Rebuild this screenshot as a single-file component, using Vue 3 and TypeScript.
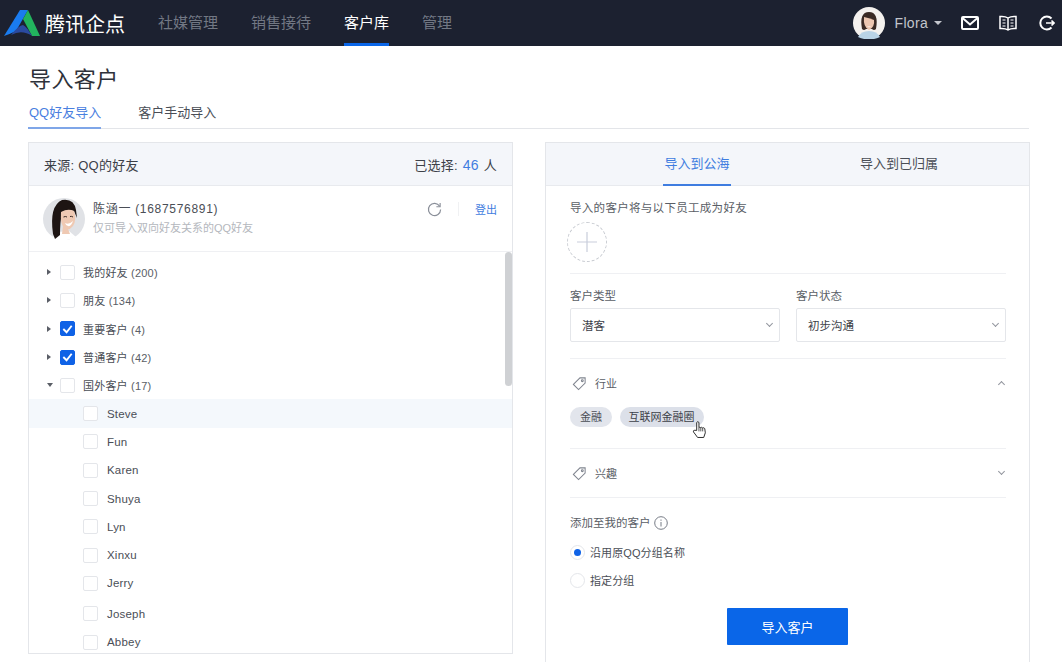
<script setup lang="ts">
const navItems = [
  { label: '社媒管理', active: false },
  { label: '销售接待', active: false },
  { label: '客户库', active: true },
  { label: '管理', active: false },
]

const groups = [
  { label: '我的好友', count: 200, checked: false, open: false },
  { label: '朋友', count: 134, checked: false, open: false },
  { label: '重要客户', count: 4, checked: true, open: false },
  { label: '普通客户', count: 42, checked: true, open: false },
  { label: '国外客户', count: 17, checked: false, open: true },
]

const friends = ['Steve', 'Fun', 'Karen', 'Shuya', 'Lyn', 'Xinxu', 'Jerry', 'Joseph', 'Abbey']
</script>

<template>
  <div class="page">
    <header class="topbar">
      <div class="brand">
        <svg class="logo" viewBox="0 0 40 28" width="40" height="28">
          <path d="M0 27 L16 1 L24 1 L12 22 Q6 25 0 27Z" fill="#1a7cf0" />
          <path d="M24 1 L36 27 L28 27 L19 10Z" fill="#22b35e" />
          <path d="M7 26 Q15 16 19 16 Q23 18 28 27 Q18 20 7 26Z" fill="#2a4aa0" />
        </svg>
        <span class="brand-name">腾讯企点</span>
      </div>
      <nav class="nav">
        <a v-for="item in navItems" :key="item.label" class="nav-item" :class="{ active: item.active }">{{ item.label }}</a>
      </nav>
      <div class="top-right">
        <svg class="top-avatar" viewBox="0 0 32 32" width="32" height="32">
          <circle cx="16" cy="16" r="16" fill="#f4f1ee" />
          <path d="M5 30 Q8 24 16 24 Q24 24 27 30 Q16 35 5 30Z" fill="#b9d3e6" />
          <path d="M9 22 Q6 5 16 5 Q26 5 23 22 Q21 24 19 22 L13 22 Q11 24 9 22Z" fill="#3a2a24" />
          <path d="M11 10 Q16 11 21 13 Q22 20 16 23 Q10 20 11 10Z" fill="#edc7b1" />
          <path d="M14 19.500 Q16 21 18 19.500Z" fill="#fff" />
        </svg>
        <span class="user-name">Flora</span>
        <span class="caret"></span>
        <svg class="top-icon mail" viewBox="0 0 18 14" width="18" height="14" fill="none" stroke="#fff" stroke-width="2">
          <rect x="1" y="1" width="16" height="12" rx="1" />
          <path d="M1.5 2 L9 8.5 L16.5 2" />
        </svg>
        <svg class="top-icon book" viewBox="0 0 18 16" width="18" height="16" fill="none" stroke="#fff" stroke-width="1.5">
          <path d="M9 3 Q6 1 1 1.5 V13.5 Q6 13 9 15 Q12 13 17 13.5 V1.5 Q12 1 9 3Z M9 3 V15" />
          <path d="M3.5 5 H6.5 M3.5 8 H6.5 M3.5 11 H6.5 M11.5 5 H14.5 M11.5 8 H14.5 M11.5 11 H14.5" stroke-width="1" />
        </svg>
        <svg class="top-icon exit" viewBox="0 0 16 16" width="16" height="16" fill="none" stroke="#fff" stroke-width="2">
          <path d="M12.5 3.5 A6.5 6.5 0 1 0 12.5 12.5" />
          <path d="M7 8 H15 M12.5 5.5 L15 8 L12.5 10.5" stroke-width="1.6" />
        </svg>
      </div>
    </header>

    <main class="content">
      <h1 class="title">导入客户</h1>
      <div class="tabs">
        <a class="tab active">QQ好友导入</a>
        <a class="tab">客户手动导入</a>
      </div>

      <div class="columns">
        <section class="panel left">
          <div class="panel-head">
            <span>来源: QQ的好友</span>
            <span>已选择: <b class="num">46</b> 人</span>
          </div>
          <div class="account">
            <svg class="account-avatar" viewBox="0 0 42 42" width="42" height="42">
              <circle cx="21" cy="21" r="21" fill="#e0e2e6" />
              <path d="M9 40 L15 34 L26 33 L33 39 Q21 45 9 40Z" fill="#fff" />
              <path d="M10 36 Q6 8 19 2 Q31 0 33 12 L34 20 L31 13 Q25 11 19 14 Q17 24 17 37 L12 41Z" fill="#1d1513" />
              <path d="M18 14 Q25 10 31 13 Q34 22 30 28 Q26 33 22 31 Q17 27 18 14Z" fill="#efc9b3" />
              <path d="M20.500 19 Q22.500 18 24 19 M27 18.500 Q28.500 18 30 19" stroke="#3a2a24" stroke-width="1" fill="none" />
              <path d="M22 25 Q26 27 30 23 Q28 29 25 28 Q23 28 22 25Z" fill="#fff" />
              <path d="M20 28 L19 36 L27 36 L25 31Z" fill="#efc9b3" />
            </svg>
            <div class="account-text">
              <div class="account-name">陈涵一 (1687576891)</div>
              <div class="account-hint">仅可导入双向好友关系的QQ好友</div>
            </div>
            <div class="account-actions">
              <svg viewBox="0 0 16 16" width="15" height="15" fill="none" stroke="#8a8f99" stroke-width="1.3">
                <path d="M13.5 4.5 A6.5 6.5 0 1 0 14.5 8" />
                <path d="M14 1 V5 H10" stroke-width="1.2" />
              </svg>
              <span class="divider"></span>
              <a class="logout">登出</a>
            </div>
          </div>
          <div class="tree">
            <div class="scrollbar"></div>
            <div v-for="g in groups" :key="g.label" class="row group">
              <span class="arrow" :class="{ open: g.open }"></span>
              <span class="check" :class="{ checked: g.checked }">
                <svg v-if="g.checked" viewBox="0 0 14 14" width="14" height="14" fill="none" stroke="#fff" stroke-width="2">
                  <path d="M2.5 7 L6 10.5 L11.5 3.5" />
                </svg>
              </span>
              <span class="row-label">{{ g.label }} <span class="count">({{ g.count }})</span></span>
            </div>
            <div v-for="(f, i) in friends" :key="f" class="row friend" :class="{ hover: i === 0 }">
              <span class="check"></span>
              <span class="row-label">{{ f }}</span>
            </div>
          </div>
        </section>

        <section class="panel right">
          <div class="switch">
            <a class="switch-item active">导入到公海</a>
            <a class="switch-item">导入到已归属</a>
          </div>
          <div class="form">
            <div class="block staff">
              <div class="label spaced">导入的客户将与以下员工成为好友</div>
              <div class="add-circle">
                <svg viewBox="0 0 20 20" width="20" height="20" stroke="#c9cedb" stroke-width="1.2">
                  <path d="M10 0 V20 M0 10 H20" />
                </svg>
              </div>
            </div>
            <div class="block selects">
              <div class="field first">
                <div class="label">客户类型</div>
                <div class="select"><span>潜客</span><i class="chev"></i></div>
              </div>
              <div class="field">
                <div class="label">客户状态</div>
                <div class="select"><span>初步沟通</span><i class="chev"></i></div>
              </div>
            </div>
            <div class="block industry">
              <div class="fold">
                <svg class="tag-icon" viewBox="0 0 16 16" width="15" height="15" fill="none" stroke="#80858f" stroke-width="1.1">
                  <path d="M1.500 9 L8.500 2 H14 V7.500 L7 14.500Z" />
                  <circle cx="11" cy="5" r="1" />
                </svg>
                <span class="fold-name">行业</span>
                <i class="chev up"></i>
              </div>
              <div class="chips">
                <span class="chip">金融</span>
                <span class="chip picked">互联网金融圈</span>
                <svg class="hand" viewBox="0 0 16 20" width="15" height="19" fill="#fff" stroke="#222" stroke-width="1">
                  <path d="M5 11 V2.500 Q6.200 0.800 7.400 2.500 V8 Q8.200 7 9.200 8 Q10.200 7.200 11.200 8.300 Q12.500 7.600 13.600 9 L14.200 13.500 L12.500 18.500 H6 L1.500 12.500 Q1.400 10.500 3 10.800Z" />
                  <path d="M7.400 8 V12 M9.400 8.200 V12 M11.400 8.500 V12" stroke-width="0.8" />
                </svg>
              </div>
            </div>
            <div class="block interest">
              <div class="fold">
                <svg class="tag-icon" viewBox="0 0 16 16" width="15" height="15" fill="none" stroke="#80858f" stroke-width="1.1">
                  <path d="M1.500 9 L8.500 2 H14 V7.500 L7 14.500Z" />
                  <circle cx="11" cy="5" r="1" />
                </svg>
                <span class="fold-name">兴趣</span>
                <i class="chev"></i>
              </div>
            </div>
            <div class="add-mine">
              <div class="label inline">
                添加至我的客户
                <svg viewBox="0 0 14 14" width="14" height="14" fill="none" stroke="#777c86" stroke-width="1">
                  <circle cx="7" cy="7" r="6.300" />
                  <path d="M7 6 V10.500 M7 3.500 V4.800" />
                </svg>
              </div>
              <label class="radio-row"><span class="radio on"></span>沿用原QQ分组名称</label>
              <label class="radio-row"><span class="radio"></span>指定分组</label>
            </div>
            <button class="submit">导入客户</button>
          </div>
        </section>
      </div>
    </main>
  </div>
</template>

<style>
html, body {
  margin: 0;
  background: #fff;
}
</style>

<style scoped>
.page {
  width: 1062px;
  height: 662px;
  overflow: hidden;
  background: #fff;
  color: #33373f;
  font-family: "Liberation Sans", "Noto Sans CJK SC", sans-serif;
  font-size: 12px;
}
.topbar {
  height: 46px;
  background: #1c2130;
  display: flex;
  align-items: center;
  padding: 0 6px 0 4px;
  box-sizing: border-box;
}
.brand {
  display: flex;
  align-items: center;
  width: 154px;
}
.brand-name {
  color: #fff;
  font-size: 20px;
  margin-left: 1px;
}
.nav {
  display: flex;
  gap: 33px;
  height: 46px;
}
.nav-item {
  color: #727884;
  font-size: 15px;
  line-height: 46px;
  box-sizing: border-box;
}
.nav-item.active {
  color: #fff;
  border-bottom: 3px solid #0a66e8;
}
.top-right {
  margin-left: auto;
  display: flex;
  align-items: center;
}
.top-avatar {
  margin-right: 10px;
}
.user-name {
  color: #c3c6cc;
  font-family: "Liberation Sans", sans-serif;
  font-size: 14px;
  letter-spacing: 0.3px;
}
.caret {
  width: 0;
  height: 0;
  border-left: 4px solid transparent;
  border-right: 4px solid transparent;
  border-top: 4px solid #c3c6cc;
  margin: 0 10px 0 6px;
}
.top-icon.mail { margin: 0 0 0 9px; }
.top-icon.book { margin-left: 20px; }
.top-icon.exit { margin-left: 22px; margin-right: 1px; flex: none; }

.content {
  padding: 0 33px 0 28px;
}
.title {
  margin: 21px 0 0 1px;
  font-size: 22px;
  font-weight: 400;
  line-height: 26px;
  letter-spacing: 0.4px;
  color: #2e323a;
}
.tabs {
  display: flex;
  gap: 37px;
  margin-top: 7px;
  height: 28px;
  border-bottom: 1px solid #e3e5e9;
}
.tab {
  font-size: 13px;
  line-height: 26px;
  height: 28px;
  box-sizing: border-box;
  color: #4a4e56;
}
.tab.active {
  color: #4a80e0;
  border-bottom: 2px solid #7fa6e8;
  height: 29px;
  padding: 0 0 0 1px;
}
.columns {
  display: flex;
  gap: 32px;
  margin-top: 13px;
  align-items: flex-start;
}
.panel {
  width: 485px;
  border: 1px solid #e4e6ea;
  box-sizing: border-box;
  flex: none;
}
.panel.left {
  height: 512px;
  overflow: hidden;
}
.panel.right {
  height: 540px;
}
.panel-head {
  height: 42px;
  background: #f4f6fa;
  border-bottom: 1px solid #e8eaee;
  display: flex;
  align-items: center;
  justify-content: space-between;
  padding: 0 15px 0 15px;
  font-size: 13px;
  letter-spacing: 0.25px;
  color: #3c4048;
}
.num {
  font-weight: 400;
  color: #3f7de0;
  font-size: 14px;
  padding: 0 1px;
}
.account {
  height: 65px;
  border-bottom: 1px solid #eff0f3;
  display: flex;
  align-items: center;
  padding: 0 15px 0 14px;
}
.account-avatar {
  flex: none;
  margin-right: 7px;
}
.account-text {
  flex: 1;
  padding-left: 1px;
}
.account-name {
  font-size: 12px;
  line-height: 16px;
  letter-spacing: 0.7px;
  color: #4a4e56;
}
.account-hint {
  font-size: 11px;
  line-height: 16px;
  margin-top: 3px;
  color: #b4b7bd;
}
.account-actions {
  display: flex;
  align-items: center;
  margin-top: -19px;
}
.divider {
  width: 1px;
  height: 14px;
  background: #f0f1f3;
  margin: 0 16px 0 16px;
}
.logout {
  font-size: 11px;
  color: #3f7de0;
}
.tree {
  position: relative;
  padding-top: 6px;
}
.scrollbar {
  position: absolute;
  right: 0;
  top: 0;
  width: 7px;
  height: 134px;
  background: #cfd1d4;
  border-radius: 4px;
}
.row {
  height: 28.3px;
  display: flex;
  align-items: center;
  font-size: 11px;
  letter-spacing: 0.2px;
  color: #4a4e56;
}
.row.group {
  padding-left: 18px;
}
.row.friend {
  padding-left: 54px;
}
.row.friend:nth-last-child(2) {
  margin-top: 2px;
}
.row.hover {
  background: #f4f8fc;
}
.arrow {
  width: 0;
  height: 0;
  border-top: 3px solid transparent;
  border-bottom: 3px solid transparent;
  border-left: 4px solid #5a5e66;
  margin-right: 9px;
}
.arrow.open {
  border-left: 3px solid transparent;
  border-right: 3px solid transparent;
  border-top: 4px solid #5a5e66;
  border-bottom: 0;
  margin-right: 7px;
}
.check {
  width: 15px;
  height: 15px;
  box-sizing: border-box;
  border: 1px solid #e4e6ea;
  border-radius: 2px;
  background: #fff;
  margin-right: 8px;
  display: flex;
  align-items: center;
  justify-content: center;
}
.check.checked {
  background: #0f62e6;
  border-color: #0f62e6;
}
.friend .check {
  margin-right: 9px;
}
.count {
  color: #5a5e66;
}
.friend .row-label {
  font-size: 11.5px;
}
.switch {
  height: 42px;
  background: #f4f6fa;
  border-bottom: 1px solid #e8eaee;
  display: flex;
  padding-left: 50px;
}
.switch-item {
  width: 202px;
  text-align: center;
  line-height: 42px;
  font-size: 13px;
  color: #4a4e56;
  position: relative;
}
.switch-item.active {
  color: #3f7de0;
}
.switch-item.active::after {
  content: "";
  position: absolute;
  left: 50%;
  margin-left: -34px;
  bottom: -1px;
  width: 68px;
  height: 2px;
  background: #3f7de0;
}
.form {
  padding: 0 23px 0 24px;
}
.label {
  font-size: 11.5px;
  line-height: 16px;
  color: #5a5e66;
}
.label.spaced {
  letter-spacing: 0.3px;
}
.block {
  border-bottom: 1px solid #eff0f3;
}
.staff {
  padding-top: 14px;
  height: 88px;
  box-sizing: border-box;
}
.add-circle {
  width: 40px;
  height: 40px;
  margin-top: 6px;
  margin-left: -3px;
  box-sizing: border-box;
  border: 1px dashed #c9ccd2;
  border-radius: 50%;
  display: flex;
  align-items: center;
  justify-content: center;
}
.selects {
  display: flex;
  gap: 16px;
  height: 85px;
  padding-top: 14px;
  box-sizing: border-box;
}
.field {
  flex: 1;
}
.field.first {
  flex: none;
  width: 210px;
}
.select {
  margin-top: 4px;
  height: 32px;
  border: 1px solid #e4e6ea;
  border-radius: 2px;
  display: flex;
  align-items: center;
  justify-content: space-between;
  padding: 0 7px 0 11px;
  font-size: 11.5px;
  color: #3c4048;
}
.select .chev {
  margin-right: 0;
}
.chev {
  width: 4px;
  height: 4px;
  border-right: 1px solid #92969e;
  border-bottom: 1px solid #92969e;
  transform: rotate(45deg);
  margin-top: -3px;
  margin-right: 2px;
}
.chev.up {
  transform: rotate(225deg);
  margin-top: 3px;
}
.fold {
  display: flex;
  align-items: center;
  font-size: 11px;
  color: #5a5e66;
  height: 48px;
}
.tag-icon {
  margin-left: 2px;
  margin-right: 8px;
}
.fold-name {
  flex: 1;
}
.industry {
  height: 90px;
  box-sizing: border-box;
}
.interest {
  height: 49px;
  box-sizing: border-box;
}
.chips {
  display: flex;
  gap: 8px;
  position: relative;
}
.chip {
  height: 20px;
  line-height: 20px;
  background: #e2e5ec;
  border-radius: 10px;
  padding: 0 10px;
  font-size: 11px;
  color: #4a4e56;
}
.chip.picked {
  background: #dce0e9;
  color: #3c4048;
  padding: 0 9.5px 0 8.5px;
}
.hand {
  position: absolute;
  left: 122px;
  top: 13px;
}
.add-mine {
  padding-top: 17px;
}
.label.inline {
  display: flex;
  align-items: center;
  gap: 3px;
}
.radio-row {
  display: flex;
  align-items: center;
  font-size: 11px;
  letter-spacing: 0.1px;
  color: #4a4e56;
  margin-top: 12px;
  height: 16px;
}
.add-mine .radio-row:first-of-type {
  margin-top: 13px;
}
.radio {
  width: 15px;
  height: 15px;
  box-sizing: border-box;
  border: 1px solid #e4e6ea;
  border-radius: 50%;
  margin-right: 5px;
  position: relative;
}
.radio.on::after {
  content: "";
  position: absolute;
  left: 3px;
  top: 3px;
  width: 7px;
  height: 7px;
  border-radius: 50%;
  background: #0f62e6;
}
.submit {
  display: block;
  margin: 20px 0 0 157px;
  width: 121px;
  height: 37px;
  border: 0;
  border-radius: 1px;
  background: #0a66e8;
  color: #fff;
  font-size: 13px;
  font-family: inherit;
}
</style>
